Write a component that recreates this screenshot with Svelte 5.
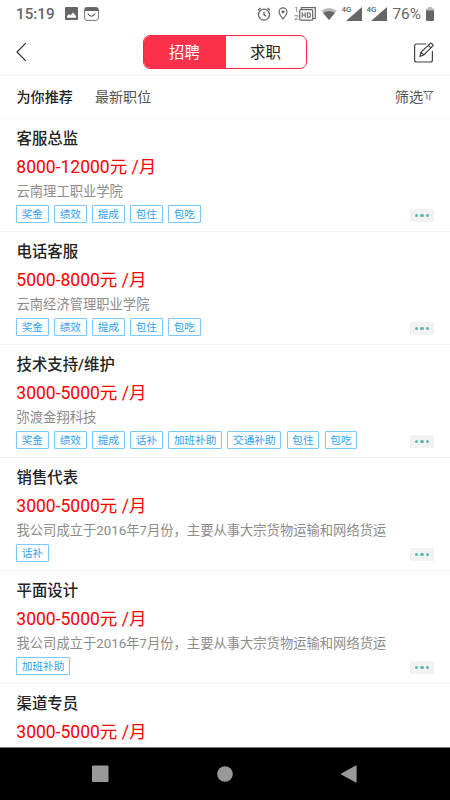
<script>
  let mode = "招聘";
  let tab = "为你推荐";

  const modes = ["招聘", "求职"];
  const tabs = ["为你推荐", "最新职位"];

  const jobs = [
    {
      title: "客服总监",
      salary: "8000-12000元 /月",
      company: "云南理工职业学院",
      tags: ["奖金", "绩效", "提成", "包住", "包吃"],
    },
    {
      title: "电话客服",
      salary: "5000-8000元 /月",
      company: "云南经济管理职业学院",
      tags: ["奖金", "绩效", "提成", "包住", "包吃"],
    },
    {
      title: "技术支持/维护",
      salary: "3000-5000元 /月",
      company: "弥渡金翔科技",
      tags: ["奖金", "绩效", "提成", "话补", "加班补助", "交通补助", "包住", "包吃"],
    },
    {
      title: "销售代表",
      salary: "3000-5000元 /月",
      company: "我公司成立于2016年7月份，主要从事大宗货物运输和网络货运",
      tags: ["话补"],
    },
    {
      title: "平面设计",
      salary: "3000-5000元 /月",
      company: "我公司成立于2016年7月份，主要从事大宗货物运输和网络货运",
      tags: ["加班补助"],
    },
    {
      title: "渠道专员",
      salary: "3000-5000元 /月",
      company: "",
      tags: [],
    },
  ];
</script>

<div class="screen">
  <div class="status">
    <span class="time">15:19</span>
    <svg class="photo" width="13" height="13" viewBox="0 0 13 13">
      <rect width="13" height="13" rx="1" fill="#666" />
      <path d="M2 10.7V9l2-2 1.5 1.5L8 5.5l3 3.5v1.7z" fill="#fff" />
    </svg>
    <svg class="bag" width="15" height="14" viewBox="0 0 15 14">
      <rect x=".6" y=".6" width="13.8" height="12.8" rx="2.4" fill="#fff" stroke="#777" />
      <path d="M.6 4V2.5Q.6.2 3 .2h9q2.4 0 2.4 2.3V4z" fill="#666" />
      <path d="M3.6 6.5q3.9 5.4 7.8 0" fill="none" stroke="#555" stroke-width="1.1" />
    </svg>
    <div class="signals">
      <svg width="14" height="14" viewBox="0 0 14 14" fill="none" stroke="#666" stroke-width="1.3">
        <circle cx="7" cy="7.7" r="5.5" />
        <path d="M7 4.7v3.2l2.2 1.4M.8 3.3l2.8-2.4M13.2 3.3L10.4.9" />
      </svg>
      <svg class="pin" width="10" height="13" viewBox="0 0 10 13">
        <path d="M5 .9a3.9 3.9 0 0 0-3.9 3.9C1.1 7.5 5 11.9 5 11.9s3.9-4.4 3.9-7.1A3.9 3.9 0 0 0 5 .9z" fill="none" stroke="#666" stroke-width="1.2" />
        <circle cx="5" cy="4.8" r="1.5" fill="#666" />
      </svg>
      <div class="sims"><span>1</span><span>2</span></div>
      <svg class="hd" width="17" height="14" viewBox="0 0 17 14">
        <path d="M2.5 2.5V.7h13.8v10.8H14" fill="none" stroke="#666" stroke-width="1.2" />
        <rect x=".7" y="2.7" width="13" height="10.5" rx="1" fill="#fff" stroke="#666" stroke-width="1.2" />
        <path d="M3.2 5.2v5.6M6.2 5.2v5.6M3.2 8h3M8.4 5.7v4.6h1q2 0 2-2.3t-2-2.3z" fill="none" stroke="#666" stroke-width="1.1" />
      </svg>
      <svg class="wifi" width="16" height="12" viewBox="0 0 16 12">
        <path d="M.2 2.7Q8-2.7 15.8 2.7L8 12z" fill="#bbb" />
        <path d="M2.1 5Q8 1.2 13.9 5L8 12z" fill="#666" />
      </svg>
      {#each [1, 2] as sim}
        <div class="cell">
          <span>4G</span>
          <svg width="16" height="14" viewBox="0 0 16 14"><path d="M16 0v14H0z" fill="#666" /></svg>
        </div>
      {/each}
      <span class="percent">76%</span>
      <svg class="battery" width="8" height="14" viewBox="0 0 8 14">
        <path d="M0 1.5h2V0h4v1.5h2V4H0z" fill="#bbb" />
        <path d="M0 3.6h8V13q0 1-1 1H1q-1 0-1-1z" fill="#666" />
      </svg>
    </div>
  </div>

  <header>
    <svg width="11" height="20" viewBox="0 0 11 20" fill="none" stroke="#333" stroke-width="1.2">
      <path d="M9.8 1.2L1 10l8.8 8.8" />
    </svg>
    <div class="switch">
      {#each modes as name}
        <button class:active={mode === name} on:click={() => (mode = name)}>{name}</button>
      {/each}
    </div>
    <svg width="21" height="21" viewBox="0 0 21 21" fill="none" stroke="#444" stroke-width="1.2">
      <path d="M13 2H3.5Q1.6 2 1.6 4v14q0 2 2 2h13.8q2 0 2-2V9" />
      <path d="M7 14.4l1-4L17 1.6q.8-.8 1.7 0l.9.9q.8.9 0 1.7L10.8 13zM15.4 3.4L18 6M8.2 10.4l2.5 2.5" />
    </svg>
  </header>

  <nav>
    {#each tabs as name}
      <button class:active={tab === name} on:click={() => (tab = name)}>{name}</button>
    {/each}
    <button class="filter">
      筛选
      <svg width="11" height="12" viewBox="0 0 11 12" fill="none" stroke="#666">
        <path d="M.3 1.5h10M1 1.5l3 3.3v4.5M9.6 1.5L6.8 4.8v5.4" />
      </svg>
    </button>
  </nav>

  <main>
    {#each jobs as job}
      <div class="job">
        <div class="title">{job.title}</div>
        <div class="salary">{job.salary}</div>
        <div class="company">{job.company}</div>
        {#if job.tags.length}
          <div class="bottom">
            {#each job.tags as tag}
              <span class="tag">{tag}</span>
            {/each}
            <span class="more"><i></i><i></i><i></i></span>
          </div>
        {/if}
      </div>
    {/each}
  </main>

  <footer>
    <svg width="18" height="18" viewBox="0 0 18 18"><rect x="1" y=".5" width="16.5" height="16.5" rx="1" /></svg>
    <svg width="18" height="18" viewBox="0 0 18 18"><circle cx="9" cy="9" r="7.8" /></svg>
    <svg width="18" height="18" viewBox="0 0 18 18"><path d="M16.6 1v16q0 .8-.8.4L1.2 9.4q-.6-.4 0-.8L15.8.4q.8-.4.8.6z" /></svg>
  </footer>
</div>

<style>
  :global(body) {
    margin: 0;
    background: #fff;
  }

  .screen {
    display: flex;
    flex-direction: column;
    width: 450px;
    height: 800px;
    overflow: hidden;
    background: #fff;
    font-family: Roboto, "Noto Sans CJK SC", sans-serif;
    color: #222;
  }

  svg {
    display: block;
    flex: none;
  }

  button {
    padding: 0;
    border: none;
    background: none;
    font: inherit;
    color: inherit;
    cursor: pointer;
  }

  .status {
    display: flex;
    flex: none;
    align-items: center;
    height: 27px;
    padding: 0 16px;
    color: #666;
  }

  .time {
    width: 49px;
    font-size: 15.2px;
    font-weight: 500;
  }

  .bag {
    margin-left: 6px;
  }

  .signals {
    display: flex;
    align-items: center;
    margin-left: auto;
  }

  .pin {
    margin-left: 7px;
  }

  .sims {
    display: flex;
    flex-direction: column;
    margin-left: 6px;
    font-size: 7.5px;
    line-height: 8px;
  }

  .hd {
    margin-left: 1px;
  }

  .wifi {
    margin-left: 5px;
  }

  .cell {
    display: flex;
    align-items: flex-start;
    width: 21px;
    margin-left: 4px;
  }

  .cell span {
    width: 5px;
    margin-top: -2px;
    font-size: 8px;
    font-weight: 500;
    line-height: 9px;
  }

  .percent {
    margin-left: 5px;
    font-size: 15.4px;
  }

  .battery {
    margin-left: 5px;
  }

  header {
    display: flex;
    flex: none;
    align-items: center;
    justify-content: space-between;
    height: 49px;
    padding: 3px 16px 0;
    box-sizing: border-box;
    border-bottom: 2px solid #f5f5f5;
  }

  .switch {
    display: flex;
    width: 164px;
    height: 34px;
    margin-left: 9px;
    box-sizing: border-box;
    border: 1px solid #ff2541;
    border-radius: 7px;
    overflow: hidden;
  }

  .switch button {
    flex: 1;
    padding-bottom: 2px;
    font-size: 15.4px;
  }

  .switch .active {
    flex: 0 0 82px;
    background: #ff3049;
    color: #fff;
  }

  nav {
    display: flex;
    flex: none;
    align-items: center;
    gap: 22px;
    height: 43px;
    padding: 0 16px 2px 16.5px;
    box-sizing: border-box;
    border-bottom: 1px solid #f5f5f5;
    font-size: 14.1px;
    color: #555;
  }

  nav .active {
    font-weight: 500;
    color: #222;
  }

  nav .filter {
    display: flex;
    align-items: center;
    margin-left: auto;
  }

  main {
    flex: 1;
    overflow: hidden;
  }

  .job {
    height: 113px;
    padding: 7px 16px 0;
    box-sizing: border-box;
    border-bottom: 1px solid #f3f3f3;
    white-space: nowrap;
  }

  .title {
    height: 27px;
    padding-left: 0.5px;
    font-size: 15.4px;
    font-weight: 500;
    line-height: 27px;
  }

  .salary {
    height: 27px;
    padding-left: 0.3px;
    font-size: 17.5px;
    line-height: 28px;
    color: #f00;
  }

  .company {
    height: 23px;
    padding-left: 0.5px;
    font-size: 13.3px;
    line-height: 23px;
    color: #8c8c8c;
  }

  .bottom {
    display: flex;
    gap: 5.3px;
    margin-top: 2px;
  }

  .tag {
    height: 18px;
    padding: 1px 4.7px 0;
    box-sizing: border-box;
    border: 1px solid #7cc8fa;
    border-radius: 1px;
    font-size: 10.67px;
    line-height: 16px;
    color: #2ba3f2;
  }

  .more {
    display: flex;
    align-items: center;
    justify-content: center;
    gap: 2px;
    width: 24px;
    height: 13px;
    margin: 4px 0 0 auto;
    background: #f2f2f2;
    border-radius: 1px;
  }

  .more i {
    width: 3.6px;
    height: 3.6px;
    border-radius: 50%;
    background: #5bb8b0;
  }

  footer {
    display: flex;
    flex: none;
    align-items: center;
    justify-content: space-between;
    height: 53px;
    padding: 0 92px 0 91px;
    box-sizing: border-box;
    border-top: 1px solid #777;
    background: #000;
    fill: #999;
  }
</style>
